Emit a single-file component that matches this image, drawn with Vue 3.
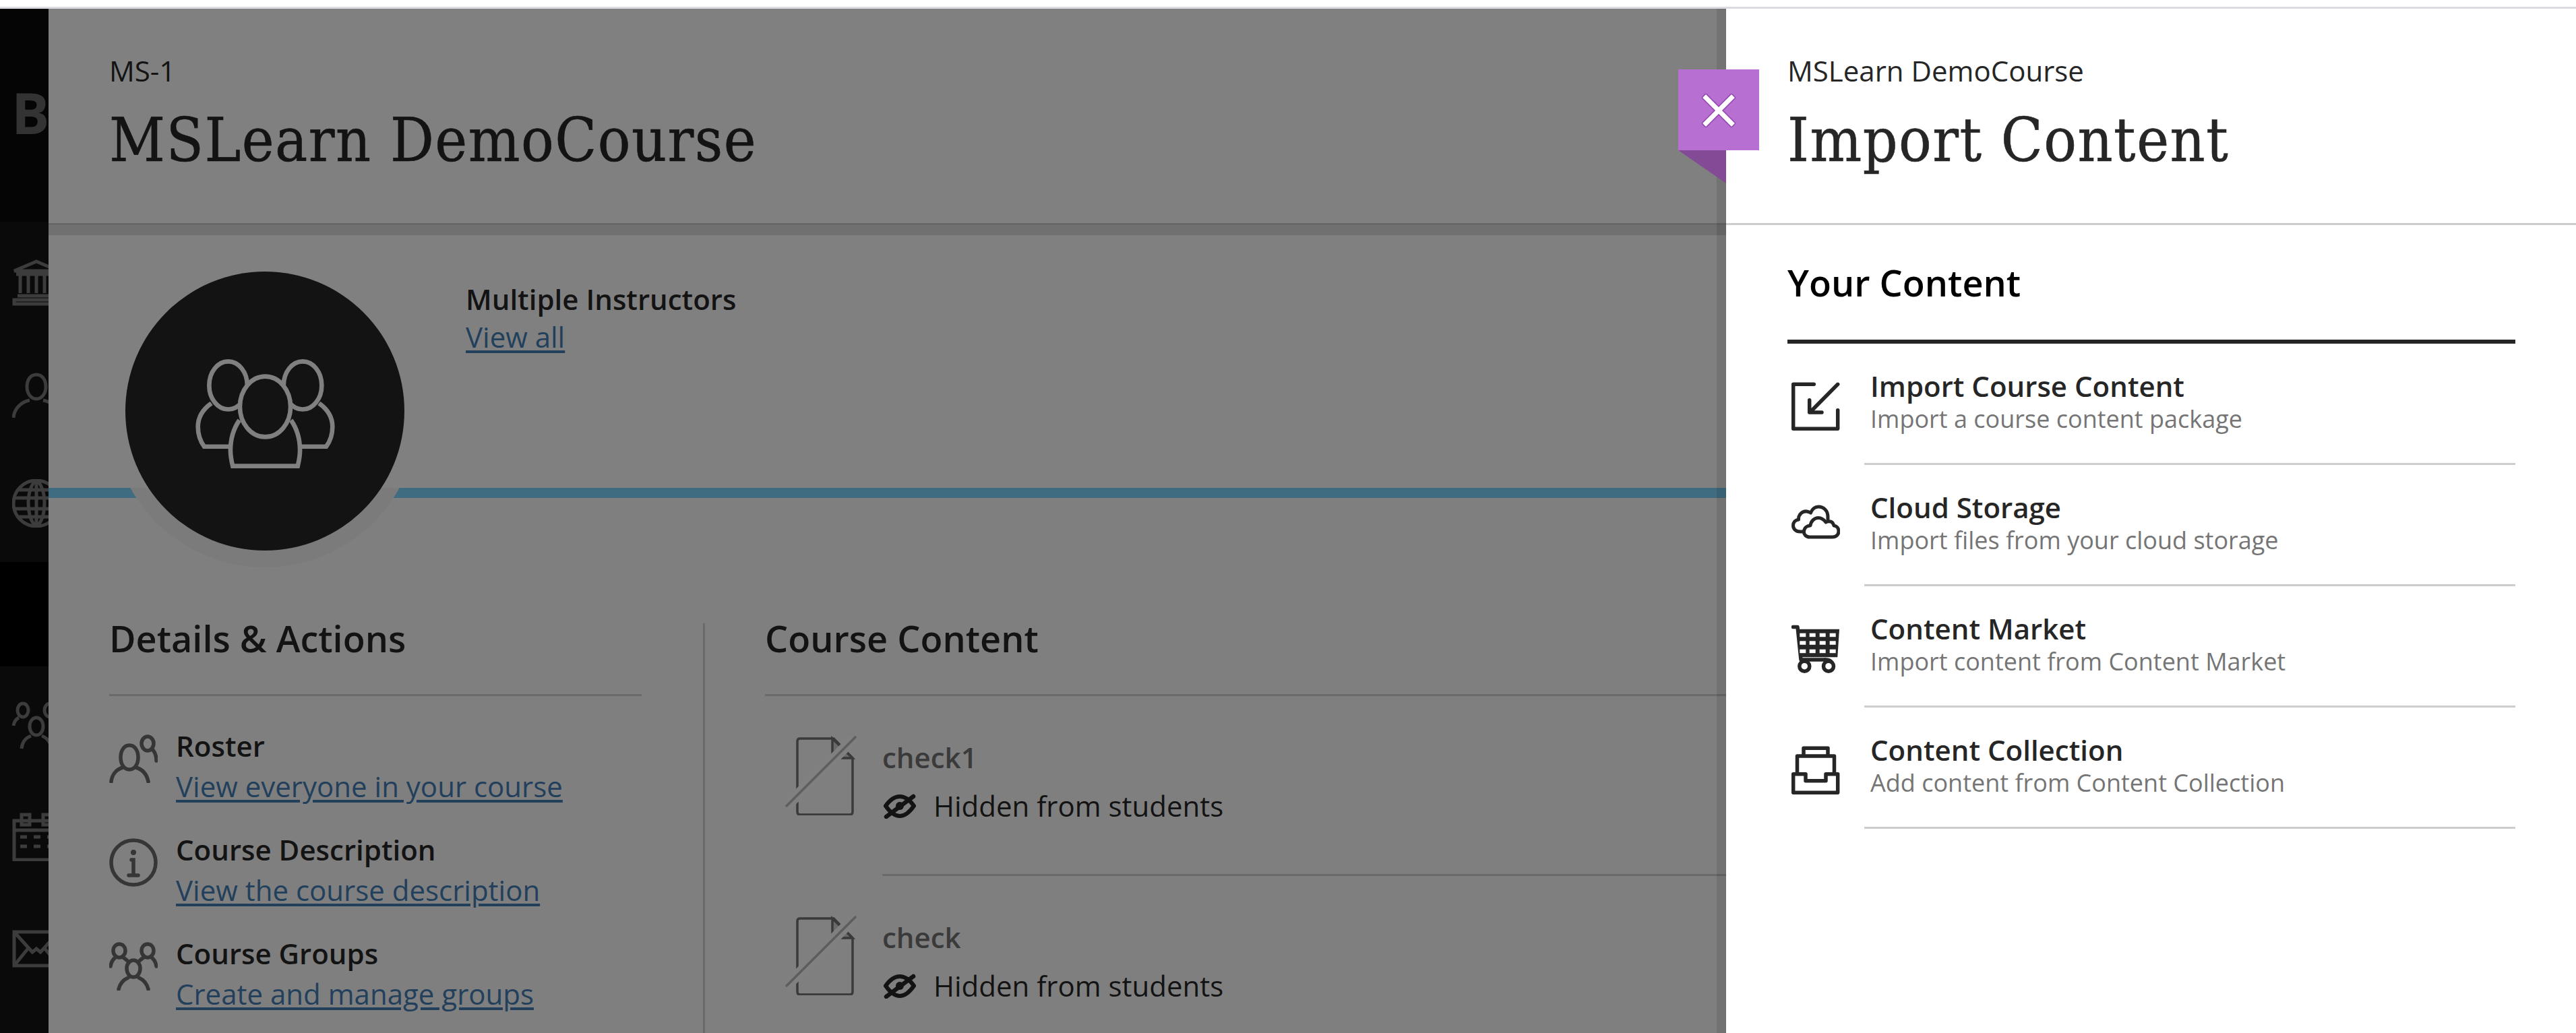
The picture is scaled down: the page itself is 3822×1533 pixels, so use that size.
<template>
  <div class="page">
    <div class="topline"></div>
    <div class="shell">
      <!-- left nav, mostly hidden under the dim page -->
      <nav class="sidebar">
        <div class="logo">B</div>
        <div v-for="item in navItems" :key="item.name" class="nav-item" :class="{ active: item.active }">
          <svg class="nav-icon" :class="item.name" viewBox="0 0 72 72" width="72" height="72" fill="none" stroke="#3c3c3c" stroke-width="5">
            <path :d="item.d" />
          </svg>
        </div>
      </nav>

      <main class="course">
        <header class="course-head">
          <div class="course-id">MS-1</div>
          <h1 class="course-title">MSLearn DemoCourse</h1>
        </header>
        <div class="head-shadow"></div>

        <section class="profile">
          <div class="avatar-wrap">
            <div class="avatar">
              <svg viewBox="0 0 620 487" width="207" height="162" fill="#131313" stroke="#808080" stroke-width="20">
                <path d="M70 197C30 225 10 260 10 302C10 340 22 368 38 390H160" />
                <path d="M550 197C590 225 610 260 610 302C610 340 598 368 582 390H460" />
                <ellipse cx="145" cy="117" rx="85" ry="107" />
                <ellipse cx="477" cy="117" rx="85" ry="107" />
                <path d="M195 272C165 315 155 360 155 407C155 435 160 455 165 477H455C460 455 465 435 465 407C465 360 455 315 425 272" />
                <ellipse cx="310" cy="212" rx="113" ry="135" />
              </svg>
            </div>
          </div>
          <div class="instructors">
            <div class="instructors-label">Multiple Instructors</div>
            <a class="link">View all</a>
          </div>
        </section>
        <div class="band"></div>

        <section class="columns">
          <div class="details">
            <h2 class="col-title">Details &amp; Actions</h2>
            <div class="col-rule"></div>
            <div class="detail-list">
              <div v-for="d in details" :key="d.title" class="detail">
                <svg class="detail-icon" viewBox="0 0 72 72" width="72" height="72" fill="none" stroke="#363636" stroke-width="5.5" stroke-linecap="round">
                  <path :d="d.icon" />
                  <circle v-if="d.dot" cx="36" cy="21" r="4" fill="#363636" stroke="none" />
                </svg>
                <div>
                  <div class="detail-title">{{ d.title }}</div>
                  <a class="link">{{ d.link }}</a>
                </div>
              </div>
            </div>
          </div>

          <div class="content">
            <h2 class="col-title">Course Content</h2>
            <div class="col-rule"></div>
            <div v-for="c in contentItems" :key="c" class="content-item">
              <svg class="doc-icon" viewBox="0 0 106 118" width="106" height="118" fill="none">
                <path d="M18 8Q18 4 22 4H72L100 33V113Q100 117 96 117H22Q18 117 18 113Z" stroke="#3a3a3a" stroke-width="3.5" />
                <path d="M70 4V33H100Z" fill="#6a6a6a" stroke="#3a3a3a" stroke-width="3.5" />
                <path d="M0 106L105 1" stroke="#808080" stroke-width="16" />
                <path d="M1 105L105 1" stroke="#5e5e5e" stroke-width="3.5" />
              </svg>
              <div class="item-body">
                <div class="item-name">{{ c }}</div>
                <div class="item-status">
                  <svg viewBox="0 0 48 37" width="48" height="37" fill="none" stroke="#131313" stroke-width="6">
                    <path d="M3 18C10 8 18 4 24 4C30 4 38 8 45 18C38 28 30 33 24 33C18 33 10 28 3 18Z" />
                    <circle cx="24" cy="18" r="6" fill="#131313" stroke="none" />
                    <path d="M4 34L44 4" stroke-width="6.5" stroke-linecap="round" />
                  </svg>
                  <span>Hidden from students</span>
                </div>
              </div>
            </div>
          </div>
        </section>
      </main>

      <!-- slide-in panel sits over the course page -->
      <aside class="panel">
        <div class="panel-edge"></div>
        <button class="close-tab">
          <svg viewBox="0 0 50 50" width="50" height="50" fill="none" stroke-linecap="square">
            <path d="M6 6L44 44M44 6L6 44" stroke="#9140ae" stroke-width="10" />
            <path d="M6 6L44 44M44 6L6 44" stroke="#fff" stroke-width="7" />
          </svg>
        </button>
        <div class="close-fold"></div>

        <header class="panel-head">
          <div class="panel-course">MSLearn DemoCourse</div>
          <h1 class="panel-title">Import Content</h1>
        </header>

        <div class="panel-body">
          <h2 class="your-content">Your Content</h2>
          <div class="import-row" v-for="row in imports" :key="row.title">
            <div class="import-icon">
              <svg viewBox="0 0 72 72" width="72" height="72" fill="none" stroke="#262626" stroke-width="5.5" stroke-linecap="round" stroke-linejoin="round">
                <template v-if="row.kind === 'import'">
                  <path d="M33.3 3.3H2.7V69.3H68.7V41.7" />
                  <path d="M68.7 3.3L28.3 44M26.7 26.7V45H45" />
                </template>
                <template v-else-if="row.kind === 'cloud'">
                  <path stroke-width="5" d="M17 42H13C6 42 2.5 37.5 2.5 33C2.5 28 6 24.5 10.5 24C10 17 16 11 23 12C25 12.5 27 13 28.5 14C31 8 35 5 40 5C48 5 54 11 54 20V24" />
                  <path stroke-width="5" d="M27 50C22 50 18 46.5 18.5 41.5C19 36.5 23 33 28 33C29 26 34 21.5 40 21.5C45 21.5 48 24 51 28C53 26.5 55 26.5 58 27C61 27.5 62 30 63 33C67.5 33.5 70 37 70 41.5C70 46.5 66 50 61 50Z" />
                </template>
                <template v-else-if="row.kind === 'cart'">
                  <path d="M2.5 3.5H9L14 52H50" />
                  <path d="M10 6.7H71L68.3 48.3H13.5Z" fill="#262626" stroke="none" />
                  <g fill="#fff" stroke="none">
                    <template v-for="y in cartRows" :key="y">
                      <rect v-for="x in cartCols" :key="x" :x="x" :y="y" width="9" height="5.5" />
                    </template>
                  </g>
                  <path d="M50 52C54 52 58 53 60 56" />
                  <circle cx="19.3" cy="61.7" r="7.5" stroke-width="5.5" />
                  <circle cx="55" cy="61.7" r="7.5" stroke-width="5.5" />
                </template>
                <template v-else>
                  <path d="M18 12V3.3H54V12" />
                  <path d="M8.5 40V15H63.5V40" />
                  <path d="M2.7 41.7H21V51.7H51V41.7H68.7V69.3H2.7Z" />
                </template>
              </svg>
            </div>
            <div class="import-text">
              <div class="import-title">{{ row.title }}</div>
              <div class="import-sub">{{ row.sub }}</div>
            </div>
          </div>
        </div>
      </aside>
    </div>
  </div>
</template>

<script setup>
const navItems = [
  { name: 'bank', d: 'M36 3L3 17H69ZM6 22H66M12 24V50M24 24V50M36 24V50M48 24V50M60 24V50M8 54H64M3 66V60H69V66Z' },
  { name: 'user', d: 'M36 6C45 6 50 14 50 24C50 34 44 42 36 42C28 42 22 34 22 24C22 14 27 6 36 6ZM2 70C3 56 14 46 26 44M46 44C58 46 69 56 70 70' },
  { name: 'globe', d: 'M36 2A34 34 0 1 0 36 70A34 34 0 1 0 36 2ZM36 2C20 12 20 60 36 70C52 60 52 12 36 2ZM36 2V70M3 28H69M3 44H69M8 16H64M8 56H64' },
  { name: 'content', active: true, d: 'M2 3H72M2 3V70H72M2 16H72M16 16V70M30 34H72M30 34V52H72' },
  { name: 'groups', d: 'M16 3C21 3 24 8 24 13C24 18 21 23 16 23C11 23 8 18 8 13C8 8 11 3 16 3ZM56 3C61 3 64 8 64 13C64 18 61 23 56 23C51 23 48 18 48 13C48 8 51 3 56 3ZM36 24C42 24 46 30 46 37C46 44 42 50 36 50C30 50 26 44 26 37C26 30 30 24 36 24ZM2 36C3 29 6 26 10 24M14 70C15 60 20 54 28 51M44 51C52 54 57 60 58 70' },
  { name: 'calendar', d: 'M3 12H69V70H3ZM3 26H69M14 3H26V18H14ZM46 3H58V18H46ZM12 36H22M32 36H42M52 36H62M12 50H22M32 50H42M52 50H62' },
  { name: 'mail', d: 'M3 12H69V62H3ZM3 12L30 42L36 37L42 42L69 12M3 62L24 36M69 62L48 36' }
]

const details = [
  {
    title: 'Roster',
    link: 'View everyone in your course',
    icon: 'M30 16C38 16 43 24 43 34C43 44 38 52 30 52C22 52 17 44 17 34C17 24 22 16 30 16ZM3 70C4 60 10 52 20 49M40 49C50 52 56 60 58 70M57 3C62 3 66 8 66 13C66 19 62 24 57 24C52 24 48 19 48 13C48 8 52 3 57 3ZM65 23C69 28 70 33 70 39'
  },
  {
    title: 'Course Description',
    link: 'View the course description',
    dot: true,
    icon: 'M36 3A33 33 0 1 0 36 69A33 33 0 1 0 36 3ZM33 32H36V54M29 55H43'
  },
  {
    title: 'Course Groups',
    link: 'Create and manage groups',
    icon: 'M15 3C20 3 24 7 24 13C24 18 20 23 15 23C10 23 6 18 6 13C6 7 10 3 15 3ZM57 3C62 3 66 7 66 13C66 18 62 23 57 23C52 23 48 18 48 13C48 7 52 3 57 3ZM36 27C42 27 46 33 46 39C46 46 42 52 36 52C30 52 26 46 26 39C26 33 30 27 36 27ZM2 36C3 30 5 26 9 23M21 23C25 26 28 28 29 30M51 23C47 26 44 28 43 30M63 23C67 26 69 30 70 36M14 70C16 62 21 56 28 53M44 53C51 56 56 62 58 70'
  }
]

const contentItems = ['check1', 'check']

const imports = [
  { kind: 'import', title: 'Import Course Content', sub: 'Import a course content package' },
  { kind: 'cloud', title: 'Cloud Storage', sub: 'Import files from your cloud storage' },
  { kind: 'cart', title: 'Content Market', sub: 'Import content from Content Market' },
  { kind: 'collection', title: 'Content Collection', sub: 'Add content from Content Collection' }
]

const cartCols = [12.3, 26.7, 41.7, 56.7]
const cartRows = [12.7, 24.3, 36.7]
</script>

<style>
html, body {
  margin: 0;
  background: #fff;
}
</style>

<style scoped>
.page {
  width: 3822px;
  height: 1533px;
  overflow: hidden;
  background: #fff;
  font-family: 'Open Sans', 'Noto Sans', sans-serif;
  color: #131313;
}

.topline {
  height: 3px;
  margin-top: 10px;
  background: #dcdce0;
}

.shell {
  position: relative;
  display: flex;
  height: 1520px;
}

/* sidebar */
.sidebar {
  flex: 0 0 72px;
  width: 72px;
  overflow: hidden;
  background: #0a0a0a;
  display: flex;
  flex-direction: column;
  gap: 10px;
}

.logo {
  flex: 0 0 316px;
  box-sizing: border-box;
  padding: 99px 0 0 17px;
  font-size: 84px;
  line-height: 110px;
  font-weight: 700;
  color: #333;
  background: #050505;
}

.nav-item {
  flex: 0 0 155px;
  display: flex;
  align-items: center;
  padding-left: 18px;
}

.nav-item.active {
  background: #000;
}

.nav-icon {
  flex: none;
}

.nav-icon.bank,
.nav-icon.user {
  margin-top: 8px;
}

.nav-icon.content {
  margin-left: 18px;
}

/* course page, dimmed */
.course {
  flex: 1;
  min-width: 0;
  background: #808080;
}

.course-head {
  height: 321px;
  box-sizing: border-box;
  padding: 67px 0 0 90px;
  border-bottom: 3px solid #686868;
}

.course-id {
  font-size: 42px;
  line-height: 50px;
  color: #131313;
}

.course-title,
.panel-title {
  margin: 23px 0 0;
  font-family: 'DejaVu Serif', 'Liberation Serif', serif;
  font-stretch: condensed;
  font-weight: 400;
  font-size: 90px;
  line-height: 110px;
  letter-spacing: 1.5px;
  -webkit-text-stroke: 0.6px currentColor;
  white-space: nowrap;
}

.course-title {
  color: #131313;
}

.head-shadow {
  height: 15px;
  background: #707070;
}

.profile {
  display: flex;
  height: 375px;
  padding-left: 114px;
}

.avatar-wrap {
  position: relative;
  flex: none;
  width: 414px;
  height: 414px;
  margin-top: 54px;
  z-index: 1;
}

/* the soft ring below the circle, it cuts through the band */
.avatar-wrap::before {
  content: '';
  position: absolute;
  left: -21px;
  top: -17px;
  width: 456px;
  height: 456px;
  border-radius: 50%;
  background: linear-gradient(to bottom, transparent 74.1%, #7b7b7b 74.1%);
}

.avatar {
  position: relative;
  box-sizing: border-box;
  width: 414px;
  height: 414px;
  padding-top: 8px;
  border-radius: 50%;
  background: #131313;
  display: flex;
  align-items: center;
  justify-content: center;
}

.instructors {
  margin-left: 91px;
  padding-top: 67px;
}

.instructors-label {
  font-size: 42px;
  line-height: 56px;
  font-weight: 600;
}

.link {
  display: inline-block;
  font-size: 42px;
  line-height: 56px;
  color: #22405c;
  text-decoration: underline;
  text-decoration-thickness: 4px;
  text-underline-offset: 4px;
}

.band {
  height: 15px;
  background: #3f6c80;
}

.columns {
  display: grid;
  grid-template-columns: 974px 1fr;
  padding-top: 186px;
  background: #7f7f7f;
}

.details {
  box-sizing: border-box;
  padding: 0 91px 0 90px;
  border-right: 3px solid #6b6b6b;
}

.content {
  padding-left: 89px;
}

.col-title {
  margin: 0;
  font-size: 54px;
  line-height: 44px;
  font-weight: 600;
  color: #131313;
}

.col-rule {
  height: 3px;
  margin-top: 61px;
  background: #6a6a6a;
}

.detail-list {
  padding-top: 43px;
  display: flex;
  flex-direction: column;
  gap: 30px;
}

.detail {
  display: flex;
  gap: 27px;
  height: 124px;
}

.detail-icon {
  flex: none;
  margin-top: 14px;
}

.detail-title {
  font-size: 42px;
  line-height: 62px;
  font-weight: 600;
}

.detail .link {
  line-height: 58px;
}

.content-item {
  display: flex;
  height: 267px;
  padding: 59px 0 0 30px;
  box-sizing: border-box;
}

.doc-icon {
  flex: none;
}

.item-body {
  flex: 1;
  margin-left: 38px;
  height: 208px;
  box-sizing: border-box;
  padding-top: 2px;
  border-bottom: 3px solid #6a6a6a;
}

.content-item:last-child .item-body {
  border-bottom: 0;
}

.item-name {
  font-size: 42px;
  line-height: 60px;
  font-weight: 600;
  color: #3a3a3a;
}

.item-status {
  display: flex;
  align-items: center;
  gap: 26px;
  margin-top: 14px;
  margin-left: 2px;
  font-size: 42px;
  line-height: 56px;
}

/* import panel */
.panel {
  position: absolute;
  top: 0;
  right: 0;
  bottom: 0;
  width: 1261px;
  background: #fff;
  color: #262626;
}

.panel-edge {
  position: absolute;
  top: 0;
  bottom: 0;
  left: -14px;
  width: 14px;
  background: rgba(0, 0, 0, 0.1);
}

.close-tab {
  position: absolute;
  left: -71px;
  top: 90px;
  width: 120px;
  height: 120px;
  padding: 2px 0 0;
  border: 0;
  background: #b76fd1;
  display: flex;
  align-items: center;
  justify-content: center;
  z-index: 2;
}

.close-fold {
  position: absolute;
  left: -71px;
  top: 210px;
  width: 71px;
  height: 49px;
  background: #834a95;
  clip-path: polygon(0 0, 100% 0, 100% 100%);
}

.panel-head {
  height: 321px;
  box-sizing: border-box;
  padding: 67px 0 0 91px;
  border-bottom: 3px solid #cdcdcd;
}

.panel-course {
  font-size: 42px;
  line-height: 50px;
}

.panel-body {
  padding: 0 90px 0 91px;
}

.your-content {
  margin: 0;
  height: 176px;
  box-sizing: border-box;
  padding-top: 51px;
  font-size: 54px;
  line-height: 68px;
  font-weight: 600;
  color: #000;
  border-bottom: 6px solid #262626;
}

.import-row {
  display: flex;
  height: 180px;
}

.import-icon {
  flex: 0 0 108px;
  padding: 57px 0 0 6px;
}

.import-text {
  flex: 1;
  box-sizing: border-box;
  padding: 38px 0 0 9px;
  border-bottom: 3px solid #cdcdcd;
}

.import-title {
  font-size: 42px;
  line-height: 50px;
  font-weight: 600;
}

.import-sub {
  font-size: 36px;
  line-height: 47px;
  color: #757575;
}
</style>
